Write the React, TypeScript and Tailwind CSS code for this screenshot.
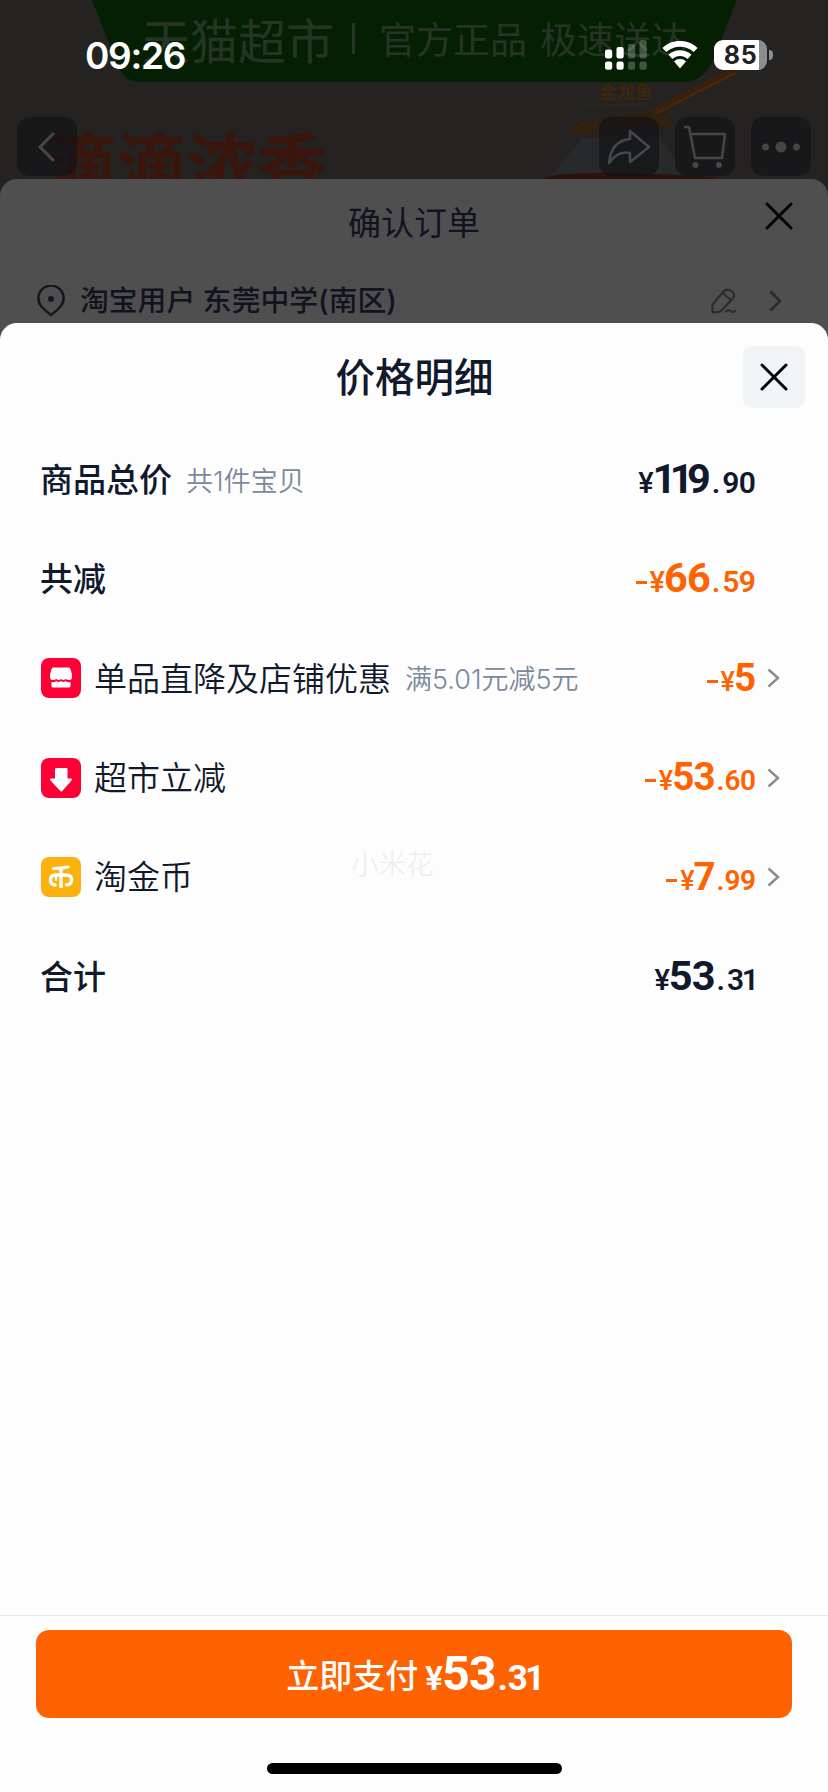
import type { ReactNode } from "react";

const CJK = "font-['Inter','Noto_Sans_CJK_SC',sans-serif]";

function Wifi() {
  return (
    <svg width="36" height="28" viewBox="0 0 36 28" className="block">
      <path d="M18 0C11 0 5 2.6.4 7l3.9 4.1C8 7.600 12.700 5.700 18 5.700s10 1.900 13.700 5.400L35.600 7C31 2.600 25 0 18 0Z" fill="#fff" />
      <path d="M18 9.300c-4.500 0-8.500 1.700-11.500 4.500l3.900 4.100c2-1.900 4.700-3 7.600-3s5.600 1.100 7.600 3l3.900-4.100c-3-2.800-7-4.500-11.500-4.500Z" fill="#fff" />
      <path d="M18 18.400c-2.200 0-4.100.800-5.500 2.100L18 26.800l5.500-6.300c-1.400-1.300-3.300-2.100-5.500-2.100Z" fill="#fff" stroke="#fff" strokeWidth="1" strokeLinejoin="round" />
    </svg>
  );
}

function Signal() {
  const bars = [
    { x: 0, top: 9.5, dim: false },
    { x: 11.500, top: 7, dim: false },
    { x: 23, top: 4, dim: true },
    { x: 34.500, top: 0, dim: true },
  ];
  return (
    <svg width="42" height="30" viewBox="0 0 42 30" className="block">
      {bars.map((b) => (
        <g key={b.x} fill="#fff" opacity={b.dim ? 0.24 : 1}>
          <rect x={b.x} y={b.top} width="7.200" height={18.500 - b.top} rx="2.200" />
          <rect x={b.x} y="21.500" width="7.200" height="8.300" rx="2.200" />
        </g>
      ))}
    </svg>
  );
}

function StatusBar() {
  return (
    <div className="absolute inset-x-0 top-0 flex h-[110px] items-center pr-[55px] pl-[85px]">
      <span className="font-['Inter'] text-[37px] leading-none font-semibold tracking-[-1.300px] text-white">09:26</span>
      <div className="ml-auto flex items-center">
        <Signal />
        <div className="ml-[15px]">
          <Wifi />
        </div>
        <div className="ml-[16px] flex items-center">
          <div className="flex h-[30px] w-[53px] items-center justify-center rounded-[9px] bg-[linear-gradient(90deg,#fff_0,#fff_45px,#8d8d8d_45px)]">
            <span className="font-['Inter'] text-[25px] leading-none font-bold tracking-[0.500px] text-[#222]">85</span>
          </div>
          <div className="ml-[2px] h-[10px] w-[4px] rounded-r-full bg-[#8d8d8d]" />
        </div>
      </div>
    </div>
  );
}

function NavButton({ children }: { children: ReactNode }) {
  return <div className="flex h-[59px] w-[60px] items-center justify-center rounded-[13px] bg-[#131315]/70">{children}</div>;
}

function ProductHero() {
  return (
    <div className="relative h-[179px] shrink-0 bg-[#252322]">
      <svg width="828" height="200" viewBox="0 0 828 200" className="absolute top-0 left-0">
        <path d="M92 0H737L713 60Q704 82 682 82H141Q124 82 117 64Z" fill="#051f03" />
        <path d="M140 90H600" stroke="#2b201c" strokeWidth="3" />
        <path d="M548 180L582 138H660L690 180Z" fill="#27292b" />
        <path d="M544 179Q552 173 600 173T715 177V190H544Z" fill="#2c120b" />
        <path d="M645 117L738 69" stroke="#3a200c" strokeWidth="8" />
        <path d="M655 114L735 73" stroke="#472a0f" strokeWidth="1.500" />
        <path d="M570 136L572 124L590 121L640 113L668 114L674 128Q620 126 570 136Z" fill="#2f2010" />
        <path d="M576 130L584 122M592 128L598 119M606 127L612 118M620 125L626 117M634 125L640 116M648 125L654 116M661 126L666 117" stroke="#39240f" strokeWidth="2" />
        <path d="M582 106L648 104" stroke="#2e2420" strokeWidth="2.500" />
      </svg>
      <div className="absolute top-[13px] left-[142px] flex items-center whitespace-nowrap text-[#263523]">
        <span className="font-['Noto_Sans_CJK_SC',sans-serif] text-[48px] leading-[50px] font-normal">天猫超市</span>
        <i className="ml-[18px] h-[31px] w-[3px] bg-[#263523]" />
        <span className="ml-[24px] font-['Noto_Sans_CJK_SC',sans-serif] text-[37px] leading-[50px]">官方正品</span>
        <span className="ml-[13px] font-['Noto_Sans_CJK_SC',sans-serif] text-[37px] leading-[50px]">极速送达</span>
      </div>
      <span className="absolute top-[80px] left-[599px] font-['Noto_Sans_CJK_SC',sans-serif] text-[18px] leading-[22px] font-bold text-[#3e260d]">金龙鱼</span>
      <div className="absolute top-[124px] left-[47px] h-[55px] overflow-hidden">
        <span className="block font-['Noto_Sans_CJK_SC',sans-serif] text-[70px] leading-[76px] font-bold text-[#3a150b]">滴滴浓香</span>
      </div>
      <div className="absolute inset-x-[17px] top-[117px] flex gap-4">
        <NavButton>
          <svg width="20" height="32" viewBox="0 0 20 32" fill="none" stroke="#474747" strokeWidth="3">
            <path d="M17 2 3 16l14 14" />
          </svg>
        </NavButton>
        <div className="flex-1" />
        <NavButton>
          <svg width="44" height="38" viewBox="0 0 44 38" fill="none" stroke="#46484b" strokeWidth="2.500" strokeLinejoin="round">
            <path d="M23 3 42 19 23 34V25Q11 22 2 35Q4 13 23 11Z" />
          </svg>
        </NavButton>
        <NavButton>
          <svg width="44" height="44" viewBox="0 0 44 44" fill="none" stroke="#464647" strokeWidth="2.500" strokeLinejoin="round">
            <path d="M1 2H6L12 33H39L42 9H8" />
            <circle cx="12.500" cy="40" r="3" fill="#464647" stroke="none" />
            <circle cx="36" cy="40" r="3" fill="#464647" stroke="none" />
          </svg>
        </NavButton>
        <NavButton>
          <svg width="40" height="14" viewBox="0 0 40 14" fill="#464647">
            <circle cx="4.500" cy="7" r="3.500" />
            <circle cx="20" cy="7" r="5.500" />
            <circle cx="35.500" cy="7" r="3.500" />
          </svg>
        </NavButton>
      </div>
      <StatusBar />
    </div>
  );
}

function Cross() {
  return (
    <svg width="28" height="28" viewBox="0 0 28 28" fill="none" stroke="#030303" strokeWidth="3" strokeLinecap="round" className="block">
      <path d="M2 2 26 26M26 2 2 26" />
    </svg>
  );
}

function OrderHeader() {
  return (
    <div className="flex h-[144px] shrink-0 flex-col">
      <div className="grid h-[88px] shrink-0 grid-cols-[1fr_auto_1fr] items-center pr-[35px]">
        <span className="col-start-2 pt-[1px] pl-[35px] text-[33px] leading-none text-[#11131f]">确认订单</span>
        <div className="-mt-[14px] justify-self-end">
          <Cross />
        </div>
      </div>
      <div className="flex h-[68px] shrink-0 items-center pr-[46px] pl-[37px] text-[#11131f]">
        <svg width="28" height="32" viewBox="0 0 28 32" fill="none" stroke="#15171f" strokeWidth="2.500" strokeLinejoin="round">
          <path d="M14 30Q8 25.500 4.500 21.500A12.600 12.600 0 1 1 23.500 21.500Q20 25.500 14 30Z" />
          <circle cx="14" cy="14" r="3" fill="#15171f" stroke="none" />
        </svg>
        <span className="ml-[15px] text-[28.800px] leading-none font-medium">淘宝用户 东莞中学(南区)</span>
        <svg width="25" height="26" viewBox="0 0 25 26" fill="none" stroke="#2a2b2e" strokeWidth="2" strokeLinejoin="round" strokeLinecap="round" className="ml-auto">
          <path d="M1.500 16.500L12.500 3.500Q16 0 20.500 3Q25 7 21.500 11L9.500 23.500L3 24.500Q1.500 24.500 1.500 23ZM12.500 5.500L19.500 12" />
          <path d="M15 23.500q2-2.500 4.500-.500t5-.500" />
        </svg>
        <svg width="13" height="22" viewBox="0 0 13 22" fill="none" stroke="#2a2b2e" strokeWidth="2.600" className="ml-[33px]">
          <path d="M1.500 1.500 11 11 1.500 20.500" />
        </svg>
      </div>
    </div>
  );
}

function Digits({ value }: { value: string }) {
  const chars = value.split("");
  return (
    <>
      {chars.map((d, i) => {
        const last = i === chars.length - 1;
        const trim = d === "1" ? (last ? "-mr-[0.1em] -ml-[0.06em]" : "-mr-[0.16em]") : last ? "" : "-mr-[0.02em]";
        return (
          <span key={i} className={trim}>
            {d}
          </span>
        );
      })}
    </>
  );
}

type Price = { minus?: boolean; int: string; dec?: string; small?: boolean };

function Amount({ minus, int, dec, small }: Price) {
  const minor = small ? "text-[28px] font-semibold" : "text-[30px] font-semibold";
  return (
    <span className="flex items-baseline font-['Roboto'] leading-none font-bold">
      {minus && <i className="mr-[3px] h-[3px] w-[11px] -translate-y-[8px] bg-current" />}
      <span className={small ? "text-[27px] font-medium tracking-[-1px]" : "text-[29px] font-medium tracking-[-1px]"}>¥</span>
      <span className={small ? "text-[38.500px]" : "text-[41.500px]"}>
        <Digits value={int} />
      </span>
      {dec && (
        <>
          <span className={`ml-[1px] ${small ? "mr-0" : "mr-[2px]"} ${minor}`}>.</span>
          <span className={minor}>
            <Digits value={dec} />
          </span>
        </>
      )}
    </span>
  );
}

function ShopIcon() {
  return (
    <svg width="40" height="40" viewBox="0 0 40 40" className="block">
      <rect width="40" height="40" rx="8" fill="#ff0036" />
      <path d="M12.500 9.500H27.500Q29.500 9.500 30.300 14Q31 16 31 18.500Q31 22 28.500 22T24.500 21Q22.500 23 20 21Q17.500 23 15.500 21Q14 22 11.500 22T9 18.500Q9 16 9.700 14Q10.500 9.500 12.500 9.500Z" fill="#fff" />
      <path d="M10.500 24Q13 25 15.500 23Q17.500 25 20 23Q22.500 25 24.500 23Q27 25 29.500 24V28Q29.500 29.500 28 29.500H12Q10.500 29.500 10.500 28Z" fill="#fff" />
    </svg>
  );
}

function DropIcon() {
  return (
    <svg width="40" height="40" viewBox="0 0 40 40" className="block">
      <rect width="40" height="40" rx="8" fill="#ff0036" />
      <path d="M15 11H25.500V21.500H30L20.300 32.500 10 21.500H15Z" fill="#fff" stroke="#fff" strokeWidth="2" strokeLinejoin="round" />
    </svg>
  );
}

function CoinIcon() {
  return (
    <svg width="40" height="40" viewBox="0 0 40 40" className="block">
      <rect width="40" height="40" rx="8" fill="#fcb20c" />
      <g fill="none" stroke="#fff" strokeLinecap="round">
        <path d="M12.500 11.500Q20 11.500 27 10" strokeWidth="3.200" />
        <path d="M20 12V31" strokeWidth="3.400" strokeLinecap="butt" />
        <path d="M14 28Q9.500 27.500 9.500 22.800Q9.500 18 14.500 18H25.500Q30.500 18 30.500 22.800Q30.500 28 25.500 27.800" strokeWidth="3.400" />
        <path d="M15 18V23" strokeWidth="2.200" />
      </g>
    </svg>
  );
}

type Row = { label: string; note?: string; icon?: ReactNode; price: Price; dark?: boolean };

const rows: Row[] = [
  { label: "商品总价", note: "共1件宝贝", dark: true, price: { int: "119", dec: "90" } },
  { label: "共减", price: { minus: true, int: "66", dec: "59" } },
  { label: "单品直降及店铺优惠", note: "满5.01元减5元", icon: <ShopIcon />, price: { minus: true, int: "5", small: true } },
  { label: "超市立减", icon: <DropIcon />, price: { minus: true, int: "53", dec: "60", small: true } },
  { label: "淘金币", icon: <CoinIcon />, price: { minus: true, int: "7", dec: "99", small: true } },
  { label: "合计", dark: true, price: { int: "53", dec: "31" } },
];

function PriceRow({ label, note, icon, price, dark }: Row) {
  return (
    <div className="flex items-center pr-[47px] pl-[40px]">
      {icon && <div className="mr-[13px] ml-px">{icon}</div>}
      <span className={`pt-[2px] text-[33px] leading-none text-[#11192d] ${icon ? "font-[350]" : "font-medium"}`}>{label}</span>
      {note && <span className="ml-[14px] pt-[3px] text-[27px] leading-none font-[350] text-[#7c889c]">{note}</span>}
      <div className={`ml-auto ${dark ? "text-[#11192d]" : "text-[#ff6200]"} ${icon ? "" : "-mt-[2px]"}`}>
        <Amount {...price} />
      </div>
      <div className="w-[25px] pl-[11px]">
        {icon && (
          <svg width="13" height="20" viewBox="0 0 13 20" fill="none" stroke="#8b8b8d" strokeWidth="2.400" className="block">
            <path d="M1.500 1.500 11 10 1.500 18.500" />
          </svg>
        )}
      </div>
    </div>
  );
}

function PricePanel() {
  return (
    <div className="relative flex flex-1 flex-col rounded-t-[17px] bg-[#fdfdfd]">
      <div className="grid h-[107px] shrink-0 grid-cols-[1fr_auto_1fr] items-center pr-[23px]">
        <h1 className="col-start-2 pt-[4px] pl-[24px] text-[39.500px] leading-none font-medium text-[#11192d]">价格明细</h1>
        <div className="flex h-[62px] w-[62px] items-center justify-center justify-self-end rounded-[9px] bg-[#f1f4f7]">
          <Cross />
        </div>
      </div>
      <div className="grid h-[596px] shrink-0 grid-rows-6">
        {rows.map((r) => (
          <PriceRow key={r.label} {...r} />
        ))}
      </div>
      <span className="absolute top-[525px] left-[351px] text-[27.500px] leading-[32px] font-light text-[#ececec]">小米花</span>
      <div className="mt-auto flex h-[177px] shrink-0 flex-col items-center border-t border-[#e4e5e3] px-[36px] pt-[14px]">
        <button className="flex h-[88px] w-full items-center justify-center rounded-[13px] bg-[#ff6200] text-white">
          <span className="pt-[5px] text-[33px] leading-none font-medium">立即支付</span>
          <span className="ml-[7px] flex items-baseline font-['Roboto'] leading-none font-bold">
            <span className="text-[33px] font-semibold tracking-[-1px]">¥</span>
            <span className="text-[48.500px]">
              <Digits value="53" />
            </span>
            <span className="ml-px text-[35px]">.</span>
            <span className="text-[35px]">
              <Digits value="31" />
            </span>
          </span>
        </button>
        <div className="mt-[45px] h-[11px] w-[295px] rounded-full bg-black" />
      </div>
    </div>
  );
}

export default function App() {
  return (
    <div className={`flex h-[1792px] w-[828px] flex-col overflow-hidden bg-[#242322] ${CJK}`}>
      <ProductHero />
      <div className="relative flex flex-1 flex-col rounded-t-[17px] bg-[#4f4f4f]">
        <OrderHeader />
        <PricePanel />
      </div>
    </div>
  );
}
